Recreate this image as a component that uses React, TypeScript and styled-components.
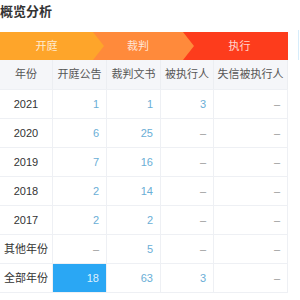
import React from 'react';
import styled, { createGlobalStyle } from 'styled-components';

const GlobalStyle = createGlobalStyle`
  body {
    margin: 0;
    background: #fff;
    font-family: 'Liberation Sans', 'Noto Sans CJK SC', sans-serif;
  }
`;

const Page = styled.div`
  width: 300px;
  height: 300px;
  overflow: hidden;
  display: flex;
`;

const Section = styled.div`
  width: 288px;
  flex-shrink: 0;
`;

const SidePanel = styled.div`
  margin-left: 10px;
  margin-top: 30px;
  height: 30px;
  border-left: 1px solid #d6ecfa;
`;

const Title = styled.h3`
  margin: 0;
  height: 32px;
  line-height: 24px;
  font-size: 13px;
  font-weight: bold;
  color: #333;
`;

const Flow = styled.div`
  display: flex;
  height: 28px;
`;

const Stage = styled.div<{ $color: string; $width: number; $next?: string }>`
  position: relative;
  width: ${(p) => p.$width}px;
  flex-shrink: 0;
  background: ${(p) => p.$color};
  color: rgba(255, 255, 255, 0.8);
  font-size: 11px;
  line-height: 28px;
  text-align: center;
  padding-left: ${(p) => (p.$next ? 0 : 8)}px;
  box-sizing: border-box;

  &::after {
    content: '';
    display: ${(p) => (p.$next ? 'block' : 'none')};
    position: absolute;
    right: -11px;
    top: 0;
    width: 0;
    height: 0;
    border-top: 14px solid transparent;
    border-bottom: 14px solid transparent;
    border-left: 11px solid ${(p) => p.$color};
    z-index: 1;
  }
`;

const Grid = styled.div`
  display: grid;
  grid-template-columns: 53px 54px 54px 53px 74px;
  border-bottom: 1px solid #eef0f4;
`;

const HeadCell = styled.div`
  height: 29px;
  line-height: 29px;
  background: #f5f6f9;
  color: #555;
  font-size: 11px;
  text-align: center;
  white-space: nowrap;
  border-right: 1px solid #eceef2;
`;

const Cell = styled.div<{ $align?: string; $tone?: string; $hi?: boolean }>`
  height: 29px;
  line-height: 29px;
  box-sizing: border-box;
  border-top: 1px solid #eef0f4;
  border-right: 1px solid #eef0f4;
  padding: 0 ${(p) => (p.$align === 'center' ? 0 : 7)}px;
  font-size: 11px;
  white-space: nowrap;
  text-align: ${(p) => p.$align || 'right'};
  color: ${(p) => (p.$hi ? 'rgba(255,255,255,0.85)' : p.$tone || '#333')};
  background: ${(p) => (p.$hi ? '#2aa7f4' : 'transparent')};
`;

type Row = { year: string; values: (number | null)[] };

const rows: Row[] = [
  { year: '2021', values: [1, 1, 3, null] },
  { year: '2020', values: [6, 25, null, null] },
  { year: '2019', values: [7, 16, null, null] },
  { year: '2018', values: [2, 14, null, null] },
  { year: '2017', values: [2, 2, null, null] },
  { year: '其他年份', values: [null, 5, null, null] },
  { year: '全部年份', values: [18, 63, 3, null] },
];

const headers = ['年份', '开庭公告', '裁判文书', '被执行人', '失信被执行人'];

export default function App() {
  return (
    <>
      <GlobalStyle />
      <Page>
        <Section>
          <Title>概览分析</Title>
          <Flow>
            <Stage $color="#fea52a" $width={93} $next="y">开庭</Stage>
            <Stage $color="#ff8a3b" $width={90} $next="y">裁判</Stage>
            <Stage $color="#fd3c1c" $width={105}>执行</Stage>
          </Flow>
          <Grid>
            {headers.map((h) => (
              <HeadCell key={h}>{h}</HeadCell>
            ))}
            {rows.map((r, ri) => (
              <React.Fragment key={r.year}>
                <Cell $align="center" $tone="#333">{r.year}</Cell>
                {r.values.map((v, i) => (
                  <Cell
                    key={i}
                    $tone={v === null ? '#999' : '#6aaed6'}
                    $hi={ri === rows.length - 1 && i === 0}
                  >
                    {v === null ? '–' : v}
                  </Cell>
                ))}
              </React.Fragment>
            ))}
          </Grid>
        </Section>
        <SidePanel />
      </Page>
    </>
  );
}
